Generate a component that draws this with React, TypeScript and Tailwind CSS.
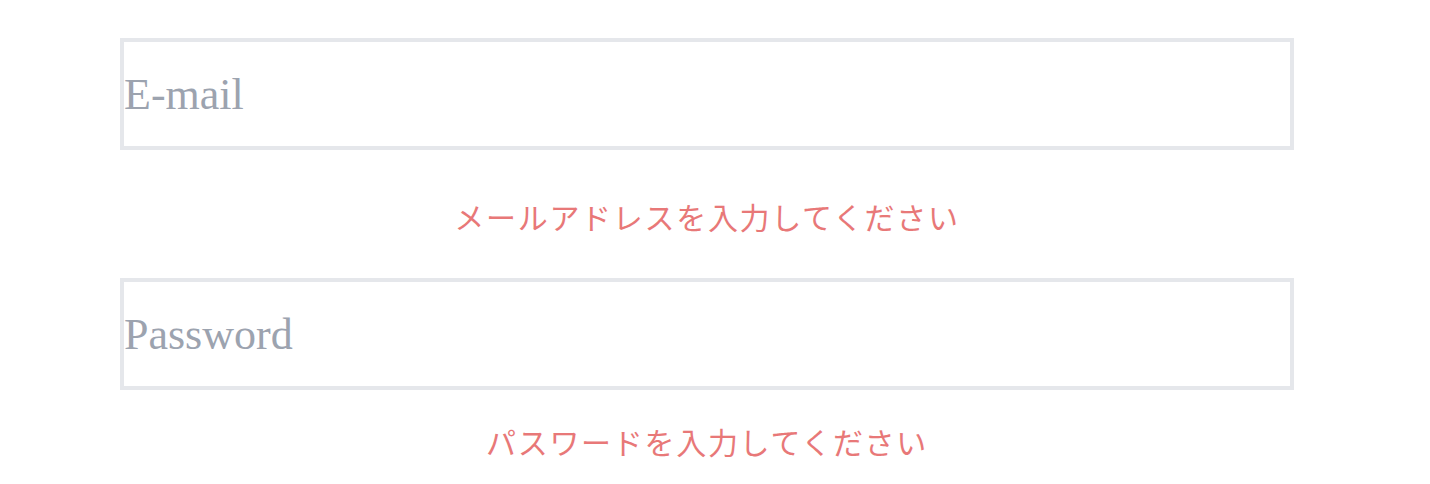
import React from "react";

export default function App() {
  const serif = { fontFamily: '"Liberation Serif", "Noto Sans CJK JP", serif' };
  return (
    <div className="min-h-[484px] w-[1430px] bg-white pt-[38px]" style={serif}>
      <div className="ml-[120px] flex w-[1174px] flex-col">
        <input
          type="email"
          placeholder="E-mail"
          className="h-[112px] w-full border-4 border-[#e5e7eb] bg-white px-0 text-[44px] text-[#374151] outline-none placeholder:text-[#9ca3af]"
          style={serif}
        />
        <p className="mt-[49px] text-center text-[30px] leading-[40px] tracking-[1.7px] text-[#e87878]">
          メールアドレスを入力してください
        </p>
        <input
          type="password"
          placeholder="Password"
          className="mt-[39px] h-[112px] w-full border-4 border-[#e5e7eb] bg-white px-0 text-[44px] text-[#374151] outline-none placeholder:text-[#9ca3af]"
          style={serif}
        />
        <p className="mt-[34px] text-center text-[30px] leading-[40px] tracking-[1.7px] text-[#e87878]">
          パスワードを入力してください
        </p>
      </div>
    </div>
  );
}
